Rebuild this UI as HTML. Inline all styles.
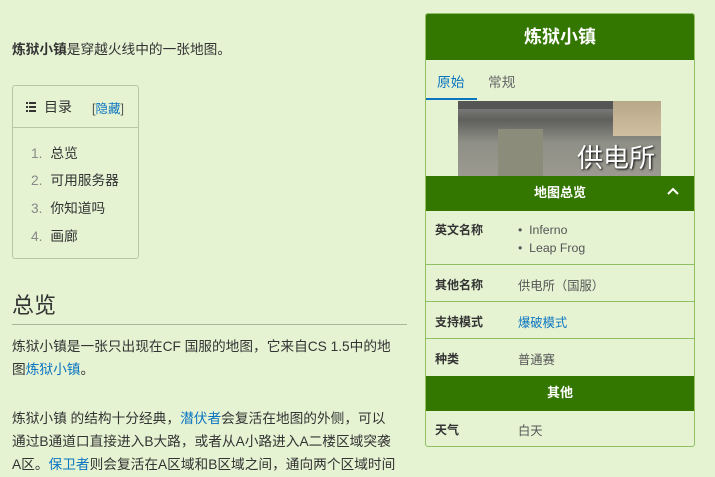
<!DOCTYPE html>
<html><head><meta charset="utf-8"><style>
body{margin:0;background:#e5f3d3;font-family:"Liberation Sans","Noto Sans CJK SC",sans-serif;color:#333;font-size:13.7px;width:715px;height:477px;overflow:hidden;position:relative}
a{color:#0b75c0;text-decoration:none}
.abs{position:absolute}
p{margin:0}
.toc{left:12px;top:85px;width:125px;height:172px;border:1px solid #b8c6a8;border-radius:3px}
.toc .hd{height:41px;border-bottom:1px solid #b8c6a8;position:relative}
.toc li{position:absolute;left:18px;font-size:13.7px}
.toc li span{color:#888;margin-right:8px}
.ib{left:425px;top:13px;width:268px;height:432px;border:1px solid #8fbf60;border-radius:3px;overflow:hidden}
.bar{background:#337700;color:#fff;font-weight:bold;text-align:center;position:absolute;left:0;width:268px}
.row{position:absolute;left:0;width:268px;border-top:1px solid #8fbf60}
.row .k{position:absolute;left:9px;font-weight:bold;font-size:12px;color:#333}
.row .v{position:absolute;left:92px;font-size:12.3px;color:#555}
.pp{white-space:nowrap;line-height:23px}
</style></head><body>
<p class="abs" style="left:12px;top:38px"><b>炼狱小镇</b>是穿越火线中的一张地图。</p>
<div class="abs toc">
 <div class="hd">
  <svg class="abs" style="left:13px;top:16px" width="10" height="10"><rect x="0" y="0" width="2" height="2" fill="#333"/><rect x="3" y="0" width="7" height="2" fill="#333"/><rect x="0" y="4" width="2" height="2" fill="#333"/><rect x="3" y="4" width="7" height="2" fill="#333"/><rect x="0" y="8" width="2" height="2" fill="#333"/><rect x="3" y="8" width="7" height="2" fill="#333"/></svg>
  <span class="abs" style="left:31px;top:11px;font-size:14px">目录</span>
  <span class="abs" style="left:79px;top:12px;font-size:12.5px;color:#555">[<a>隐藏</a>]</span>
 </div>
 <ul style="margin:0;padding:0;list-style:none">
  <li style="top:56px"><span>1.</span>总览</li>
  <li style="top:83px"><span>2.</span>可用服务器</li>
  <li style="top:111px"><span>3.</span>你知道吗</li>
  <li style="top:139px"><span>4.</span>画廊</li>
 </ul>
</div>
<div class="abs" style="left:12px;top:288px;font-size:22px;color:#333">总览</div>
<div class="abs" style="left:12px;top:324px;width:395px;border-top:1px solid #aab59e"></div>
<div class="abs pp" style="left:12px;top:335px">炼狱小镇是一张只出现在CF 国服的地图，它来自CS 1.5中的地<br>图<a>炼狱小镇</a>。</div>
<div class="abs pp" style="left:12px;top:407px">炼狱小镇 的结构十分经典，<a>潜伏者</a>会复活在地图的外侧，可以<br>通过B通道口直接进入B大路，或者从A小路进入A二楼区域突袭<br>A区。<a>保卫者</a>则会复活在A区域和B区域之间，通向两个区域时间</div>
<div class="abs ib">
 <div class="bar" style="top:0;height:46px;line-height:46px;font-size:18px">炼狱小镇</div>
 <span class="abs" style="left:11px;top:57px;color:#0b75c0;font-size:13.7px">原始</span>
 <span class="abs" style="left:62px;top:57px;color:#666;font-size:13.7px">常规</span>
 <div class="abs" style="left:0;top:84px;width:51px;height:2px;background:#0b75c0"></div>
 <div class="abs" style="left:32px;top:87px;width:203px;height:75px;background:linear-gradient(180deg,#8a8a8a 0%,#5f5f5c 25%,#8e8f86 55%,#9c9a90 100%)">
  <div class="abs" style="left:0;top:0;width:203px;height:8px;background:#555"></div>
  <div class="abs" style="left:40px;top:28px;width:45px;height:47px;background:#8b8c7a"></div>
  <div class="abs" style="left:155px;top:0;width:48px;height:35px;background:linear-gradient(#b8a88a,#d0c0a0)"></div>
  <span class="abs" style="right:6px;top:37px;color:#fff;font-size:26px;text-shadow:1px 1px 2px #000">供电所</span>
 </div>
 <div class="bar" style="top:162px;height:35px;line-height:33px;font-size:13px">地图总览<svg class="abs" style="right:15px;top:11px" width="12" height="8"><path d="M1 7 L6 2 L11 7" stroke="#fff" stroke-width="2" fill="none"/></svg></div>
 <div class="row" style="top:197px;height:53px;border-top:none">
  <span class="k" style="top:10px">英文名称</span>
  <span class="v" style="top:10px;line-height:18px">•&nbsp;&nbsp;Inferno<br>•&nbsp;&nbsp;Leap Frog</span>
 </div>
 <div class="row" style="top:250px;height:37px"><span class="k" style="top:11px">其他名称</span><span class="v" style="top:11px">供电所（国服）</span></div>
 <div class="row" style="top:287px;height:37px"><span class="k" style="top:11px">支持模式</span><span class="v" style="top:11px;color:#0b75c0">爆破模式</span></div>
 <div class="row" style="top:324px;height:37px"><span class="k" style="top:11px">种类</span><span class="v" style="top:11px">普通赛</span></div>
 <div class="bar" style="top:362px;height:35px;line-height:33px;font-size:13px">其他</div>
 <div class="row" style="top:397px;height:36px;border-top:none"><span class="k" style="top:10px">天气</span><span class="v" style="top:10px">白天</span></div>
</div>
</body></html>
